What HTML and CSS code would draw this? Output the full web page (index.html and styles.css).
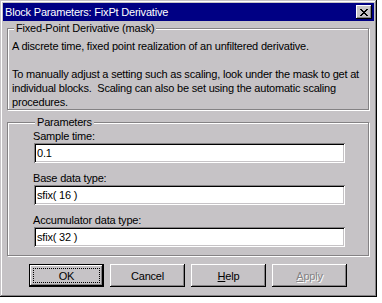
FILE: index.html
```html
<!DOCTYPE html>
<html lang="en">
<head>
  <meta charset="UTF-8" />
  <title>Block Parameters: FixPt Derivative</title>
  <link rel="stylesheet" href="styles.css">
</head>
<body>
  <div class="window">
    <div class="titlebar">
      <span class="title">Block Parameters: FixPt Derivative</span>
      <button class="close" type="button">
        <svg width="8" height="7" viewBox="0 0 8 7">
          <path d="M0 0h2v1h1v1h2V1h1V0h2v1H7v1H6v1H5v1h1v1h1v1h1v1H6V6H5V5H3v1H2v1H0V6h1V5h1V4h1V3H2V2H1V1H0z" fill="#000"/>
        </svg>
      </button>
    </div>

    <fieldset class="group">
      <legend>Fixed-Point Derivative (mask)</legend>
      <p class="gap">A discrete time, fixed point realization of an unfiltered derivative.</p>
      <p>To manually adjust a setting such as scaling, look under the mask to get at<br>individual blocks.&nbsp; Scaling can also be set using the automatic scaling<br>procedures.</p>
    </fieldset>

    <fieldset class="group params">
      <legend>Parameters</legend>
      <label for="st">Sample time:</label>
      <input id="st" type="text" value="0.1">
      <label for="bdt">Base data type:</label>
      <input id="bdt" type="text" value="sfix( 16 )">
      <label for="adt">Accumulator data type:</label>
      <input id="adt" type="text" value="sfix( 32 )">
    </fieldset>

    <div class="buttons">
      <button class="btn default" type="button"><span>OK</span></button>
      <button class="btn" type="button"><span>Cancel</span></button>
      <button class="btn" type="button"><span><u>H</u>elp</span></button>
      <button class="btn disabled" type="button"><span><u>A</u>pply</span></button>
    </div>
  </div>
</body>
</html>
```

FILE: styles.css
```css
* {
  margin: 0;
  padding: 0;
  box-sizing: border-box;
}

body {
  background: #fff;
  font-family: "Liberation Sans", Arial, sans-serif;
  font-size: 11px;
  letter-spacing: -0.2px;
  color: #000;
}

.window {
  width: 377px;
  height: 297px;
  padding: 3px;
  background: #c6c3c6;
  box-shadow: inset -1px -1px #000, inset 1px 1px #c6c3c6,
              inset -2px -2px #848284, inset 2px 2px #fff;
}

.titlebar {
  height: 18px;
  background: #000084;
  color: #fff;
  display: flex;
  align-items: center;
  justify-content: space-between;
  padding: 0 2px 0 2px;
  line-height: 13px;
}

.close {
  width: 16px;
  height: 14px;
  border: none;
  background: #c6c3c6;
  display: flex;
  align-items: center;
  justify-content: center;
  box-shadow: inset -1px -1px #000, inset 1px 1px #fff,
              inset -2px -2px #848284;
}

.group {
  min-width: 0;
  margin: 1px 5px 0 4px;
  border: 1px solid #848284;
  padding: 4px 4px 0 4px;
  box-shadow: inset 1px 1px #fff, 1px 1px #fff;
  line-height: 14px;
  white-space: nowrap;
}

.group legend {
  margin-left: 2px;
  padding: 0 2px;
  line-height: 13px;
  background: #c6c3c6;
}

.gap {
  margin-bottom: 14px;
}

.params {
  margin-top: 6px;
  padding: 1px 0 8px 25px;
  display: flex;
  flex-direction: column;
}

.params label {
  line-height: 13px;
}

.params input {
  width: 311px;
  height: 20px;
  margin: 0 0 9px 1px;
  padding: 0 3px;
  border: none;
  outline: none;
  background: #fff;
  font-family: inherit;
  font-size: 11px;
  letter-spacing: -0.2px;
  color: #000;
  box-shadow: inset 1px 1px #848284, inset -1px -1px #fff,
              inset 2px 2px #000, inset -2px -2px #c6c3c6;
}

.params input:last-child {
  margin-bottom: 0;
}

.buttons {
  display: flex;
  gap: 6px;
  margin-top: 8px;
  padding-left: 26px;
}

.btn {
  width: 75px;
  height: 23px;
  padding: 4px;
  border: none;
  background: #c6c3c6;
  font-family: inherit;
  font-size: 11px;
  letter-spacing: -0.2px;
  color: #000;
  box-shadow: inset -1px -1px #000, inset 1px 1px #fff,
              inset -2px -2px #848284;
}

.btn span {
  display: flex;
  align-items: center;
  justify-content: center;
  height: 100%;
  border: 1px solid transparent;
}

.default {
  box-shadow: inset 0 0 0 1px #000, inset -2px -2px #000,
              inset 2px 2px #fff, inset -3px -3px #848284;
}

.default span {
  border: 1px dotted #000;
}

.disabled {
  color: #848284;
  text-shadow: 1px 1px #fff;
}
```
